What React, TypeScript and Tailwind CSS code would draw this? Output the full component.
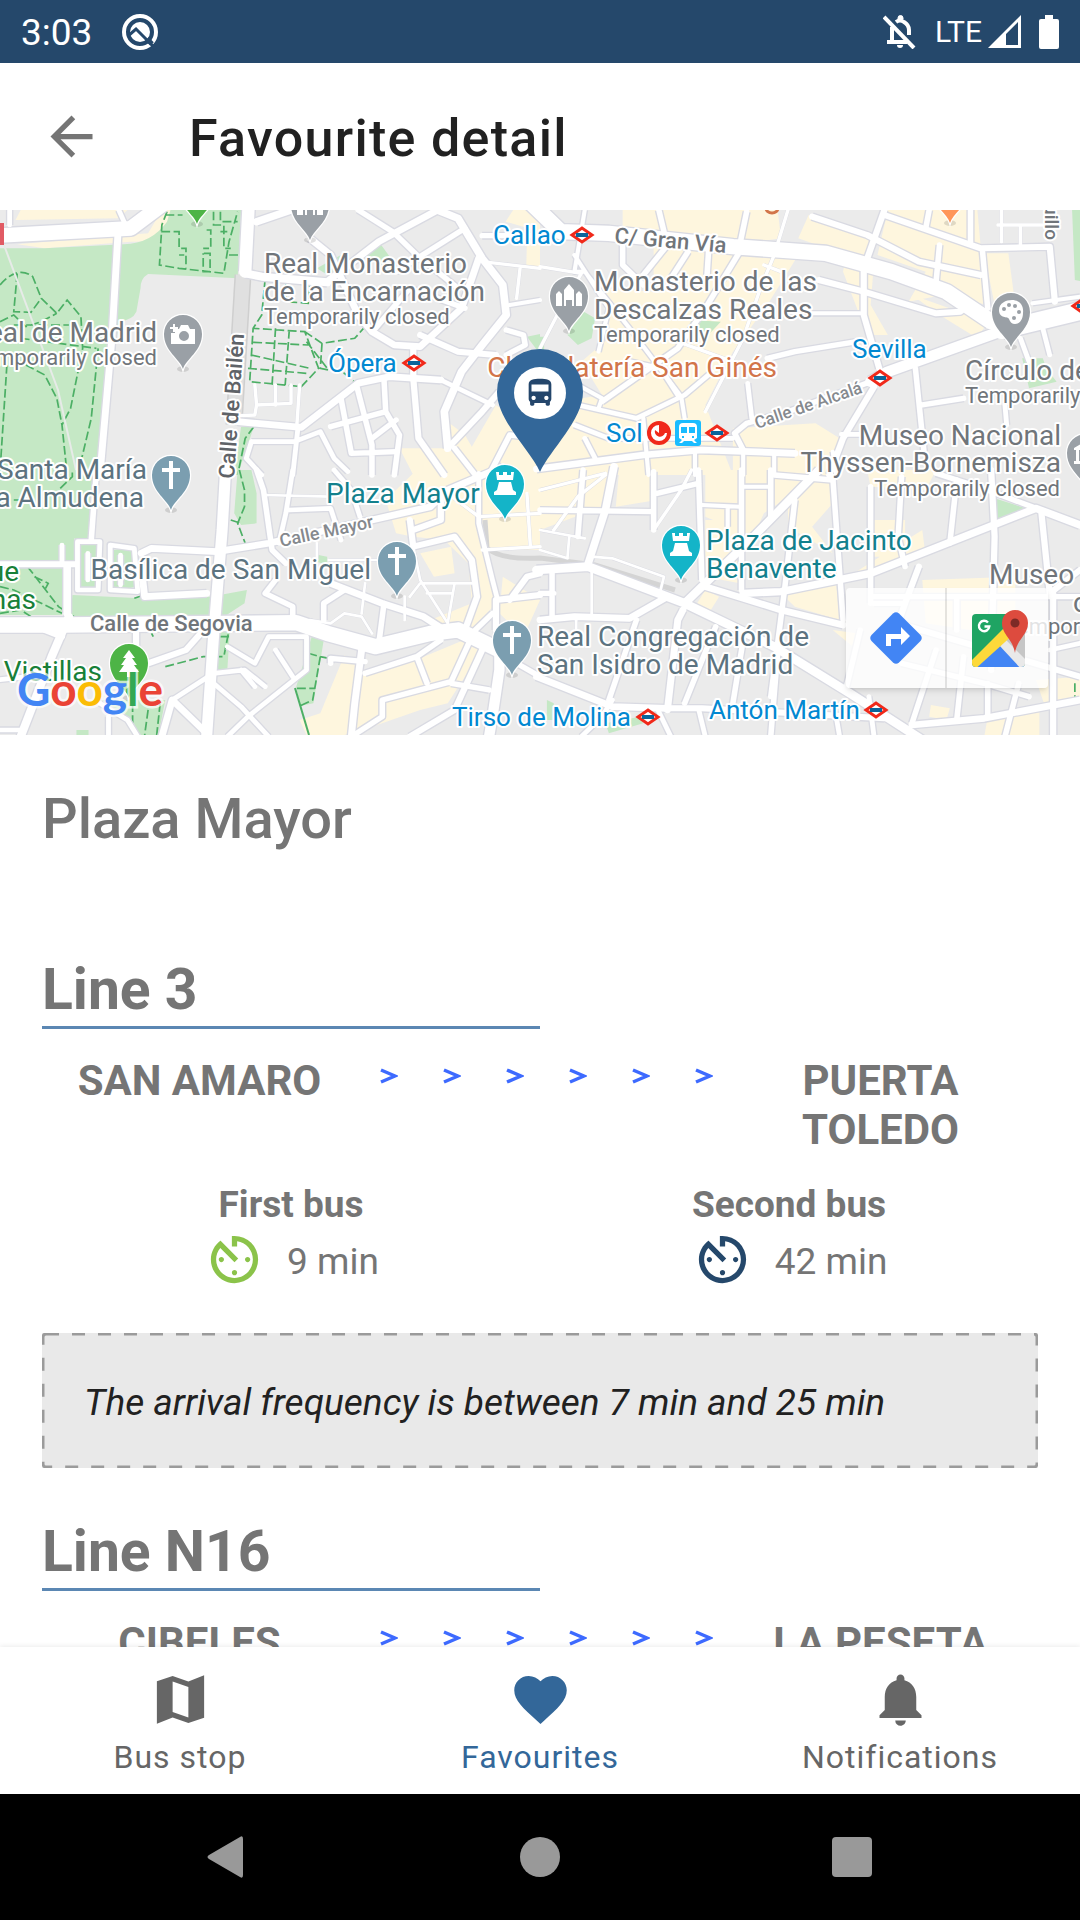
import type { ReactNode } from "react";
import { MdArrowBack, MdAvTimer, MdDirectionsBus, MdFavorite, MdNotifications } from "react-icons/md";

type Road = [number, string];
type Tile = {
  transform: string;
  cream: string[];
  green: string[];
  paths: string[];
  roads: Road[];
};

const TILES: Tile[] = [
  {
    transform: "translate(0 205) scale(.3444 .3333)",
    cream: [
      "M45 45L60 15H370L345 40Z",
      "M50 118L430 85L470 15H510L480 80Q440 115 380 110L130 130Z",
      "M1300 650L1350 690L1370 725L1440 600L1568 700V810H1200L1160 730L1290 730Z",
      "M1490 15h78v65l-100 -30z",
      "M1530 110h38v75h-40z",
    ],
    green: [
      "M0 130H130L360 118Q440 115 485 50L495 15H700L690 220L430 207Q408 220 408 250L396 320Q385 345 345 350L290 810H0Z",
      "M1050 140L1100 110L1135 160L1110 180Z",
      "M920 190L990 150L960 215Z",
      "M1530 395l38 -8v60z",
      "M700 665H737L690 810H680Z",
    ],
    paths: [
      "M0 240Q50 180 95 215L120 280L165 325L195 285L235 335L240 430L205 610L180 660L195 810",
      "M50 205L40 320L90 322L120 280M0 350L40 330L75 365L120 350L165 325",
      "M20 480L0 800M75 480L130 510L165 580L180 660",
      "M285 430L265 640L235 770M40 360H200M60 400L280 430",
      "M485 20L470 60L463 180L520 190L650 205L665 110L690 20M468 80H520V130H540V190M480 30H530",
      "M520 150H535M620 20V60H650V130H670M600 75H612V130H590M592 145H610V200H590V145M640 20V50H690M640 80H660M665 150H695",
      "M770 220L760 330L735 370L725 530L875 545L925 490L885 380L735 370M800 370L790 540M840 375L828 540M735 412L895 420M730 450L900 490M720 490L890 505",
      "M830 225V290L895 295L900 225M885 380L935 415L1030 400L1060 365M935 415L930 490L1000 505L1035 535M890 410L950 490",
      "M737 665L712 700L690 810",
    ],
    roads: [
      [44, "M-10 92L380 70L470 0"],
      [14, "M28 15V60M345 15L360 50"],
      [20, "M342 95L325 400L290 810"],
      [36, "M722 0L712 200"],
      [24, "M712 205L760 215L950 232"],
      [22, "M745 50L860 10"],
      [20, "M900 100L960 150L1000 240L1040 330L1080 380L1145 420L1220 425L1340 310L1390 160"],
      [16, "M1040 15L1140 80L1210 150L1330 250"],
      [20, "M950 230L1100 110L1280 10"],
      [16, "M1150 200L1350 70"],
      [16, "M1090 370L1190 250L1350 310"],
      [22, "M1270 15L1330 40L1400 160L1460 240L1470 330L1400 420L1340 500L1290 620L1300 730"],
      [16, "M1400 92H1568"],
      [18, "M1200 430V520L1215 700L1290 810"],
      [18, "M1220 390L1330 440L1440 450"],
      [16, "M1470 375L1520 390L1525 420L1470 450"],
      [12, "M1480 300L1568 285"],
      [10, "M1400 170L1568 190M1510 190L1500 280"],
      [20, "M690 650L875 667L1040 535L1130 515L1280 525"],
      [14, "M1280 525L1430 600"],
      [16, "M1035 540L1080 720V810M990 580L1020 745L1150 740"],
      [16, "M960 665L1120 620L1160 690L1145 810M1080 700L1150 645M1115 525L1120 620"],
      [14, "M865 670L850 810M730 710H855L930 680L970 760L1010 800M730 710L715 760L760 810"],
      [10, "M740 540L745 600L845 595V540M800 540V600M870 540L862 660M745 600L740 630L700 632"],
      [18, "M1300 730L1400 620L1450 560"],
      [16, "M1568 700L1480 690L1420 810"],
      [16, "M1320 730L1380 810"],
    ],
  },
  {
    transform: "translate(540 205) scale(.3444 .3333)",
    cream: [
      "M240 15H590L560 120L240 90Z",
      "M490 15H690L700 100L560 120Z",
      "M330 120L750 150L660 300L560 440L480 600L560 810H0V600L180 570L120 470L210 390L170 250L330 260Z",
      "M780 30L960 100L940 190L860 140L750 100Z",
      "M1010 15H1270L1280 130L1300 300L1170 270L1070 290L1120 200L980 150Z",
      "M890 140L970 170L960 300L1010 390H950L880 200Z",
      "M1290 145H1360L1380 300L1330 350Z",
      "M1080 270L1300 350L1270 400L1160 330Z",
      "M560 670L800 655L870 700L850 810H560Z",
      "M0 600L120 640L300 650V810H0Z",
    ],
    green: [
      "M110 310L160 340L150 400L110 420L80 390Z",
      "M440 345L525 350L480 400L430 370Z",
      "M1545 15h30v215l-22-5z",
      "M1400 460l60 0l10 30l30 40l-80 20z",
      "M0 395h12v40H0z",
    ],
    paths: [],
    roads: [
      [46, "M-40 -20L60 80L200 85L560 125L830 145L1020 200L1180 260L1310 350"],
      [54, "M1600 310L1340 375"],
      [32, "M1340 378L1010 500L960 530"],
      [16, "M960 530L720 620L600 655L565 685L590 735"],
      [18, "M790 35L950 90L1100 170L1280 210"],
      [18, "M1000 15L940 190V330L985 490"],
      [18, "M1000 30L1280 130L1480 125L1495 290"],
      [16, "M1250 15V110M1285 140L1300 310M1160 120L1150 230M1130 15L1120 70"],
      [18, "M810 225L940 260L1150 325L1220 320L1250 295"],
      [12, "M1430 295L1568 275M780 325H930"],
      [16, "M660 460L740 440L920 410"],
      [18, "M970 545L880 700L840 810"],
      [16, "M1090 490L1115 740M1110 600L1230 580"],
      [14, "M1460 370L1480 450M1350 600L1355 660M1395 400L1420 470M875 688H930"],
      [16, "M600 20L580 120M370 120L300 210M430 140L380 220M490 130L485 210M580 140L480 310L400 430L180 590"],
      [16, "M240 100V180L300 240M345 15L360 80"],
      [12, "M130 15L100 200L130 200L260 370L410 575L420 640M100 150L200 310L170 440"],
      [10, "M720 15L680 150L640 250L590 400L480 620M650 180L700 200"],
      [10, "M0 185L120 205L50 330L0 430M320 380L480 440L560 470"],
      [12, "M110 540L180 580L170 610"],
      [14, "M110 600L280 640L420 570L500 500M260 470L350 490L400 570"],
      [14, "M100 660L200 700H560M130 700L160 760"],
      [20, "M-10 792L300 750L470 735L740 745"],
      [14, "M603 535L615 640"],
      [12, "M300 640L315 810M450 740V810M590 740V810M680 740V810M850 740L860 810"],
      [10, "M1340 15V110M1330 60H1470M1395 60V125"],
    ],
  },
  {
    transform: "translate(0 470) scale(.3444 .3333)",
    cream: [
      "M1120 90L1200 10H1568V240L1400 235L1440 400L1370 480L1250 450L1370 400L1360 280L1290 210L1200 200L1150 190Z",
      "M1000 555L1060 600L1230 560L1370 500L1400 540L1300 700L1220 720L1080 770L1000 795H890L870 750L930 730Z",
      "M1460 320L1568 390L1520 500L1450 430Z",
      "M1220 250l90 -20l10 80l-60 10z",
    ],
    green: [
      "M0 0H285L260 230L215 205V275H0Z",
      "M0 295H185L180 435H0Z",
      "M225 220H285V360H225Z",
      "M325 240L385 235L395 350L325 365Z",
      "M210 375L410 385L610 380L717 360L710 400L650 440H205Z",
      "M690 0H730L745 70V160L700 165L680 130Z",
      "M640 440H670L660 600H630Z",
      "M905 500L940 510L910 700L870 708L860 650Z",
      "M290 690H480L460 795H410L350 740Z",
      "M925 255l25 5v25l-30-10z",
      "M222 780h35v15h-35z",
    ],
    paths: [
      "M80 290L110 330L170 410L215 440M0 350L40 360L120 400L180 430M100 320L140 340L130 360M0 430L60 420L90 440",
      "M695 0L710 60V110L690 160L712 220M670 150L700 160",
      "M480 590L590 560L650 560L665 480M640 500H665M640 440H680M440 490L445 500",
      "M895 550L930 560L955 565M930 560L908 690L870 708M862 655H915",
      "M385 700V760M430 720L420 795M465 700L455 795M390 385L410 378M175 55L210 20V0M40 90H60",
    ],
    roads: [
      [32, "M655 0L645 180L620 500L600 800"],
      [46, "M-20 465H180L860 458L950 490L1090 530L1250 490L1330 480L1450 540"],
      [18, "M-10 283H220"],
      [22, "M195 290V430"],
      [16, "M280 0L265 210"],
      [14, "M225 215H290L285 360H225ZM320 225L390 235L400 365L320 360Z"],
      [14, "M180 225V280M255 250V330M350 255V345"],
      [20, "M600 370L420 380L410 290M410 250L440 235L630 245L780 220L1080 150L1250 110L1300 60L1460 -10"],
      [24, "M200 440L150 560L60 800"],
      [18, "M130 480L180 500M395 480V540M430 580L540 540L600 470"],
      [16, "M745 0L765 60L790 240L830 280"],
      [14, "M850 0L830 130L810 220M840 120L960 115L990 210M970 0L1020 60L1045 140"],
      [8, "M765 75L960 80M920 220V270M955 270H1100"],
      [16, "M800 330L770 370L850 410V450"],
      [20, "M960 340L1110 400L1230 440L1290 480"],
      [16, "M1115 400L1100 520M940 450V400L1000 360"],
      [8, "M900 450L960 460L1000 430L1050 440L1080 490M1050 430L1060 340"],
      [14, "M660 530L740 580L780 500H890V600L720 740L660 800M800 540L850 620"],
      [14, "M620 610L710 600L770 650M620 640L700 710L780 800M500 690L620 610M740 650L700 600"],
      [20, "M470 800L500 690L600 790"],
      [16, "M960 580V565L1060 575M1060 610L1210 560L1280 510M1210 560L1240 640"],
      [20, "M1050 540L1030 700L1020 800"],
      [16, "M1020 800L1110 740V690L1310 635L1370 500M1310 640L1420 660"],
      [18, "M1400 540L1320 720L1190 800"],
      [30, "M1450 480V600L1430 740L1420 800"],
      [18, "M1190 150L1200 230L1320 200L1370 270L1385 380L1350 480M1200 180L1280 150V90"],
      [8, "M1200 230L1220 330L1300 460M1190 380L1220 340H1370M1320 340L1300 460M1240 370H1310M1175 380V450"],
      [18, "M1440 480V390L1568 375M1480 390L1530 320L1568 310"],
      [14, "M1390 10V160L1430 330L1445 390"],
      [10, "M1400 240L1568 230M1300 70L1390 140L1568 130M1530 70L1540 230"],
      [16, "M1500 580L1568 620M1370 490L1430 430"],
      [14, "M-10 630L80 620M290 700L370 750L400 800M315 740V800M-10 780H60"],
    ],
  },
  {
    transform: "translate(540 470) scale(.3444 .3333)",
    cream: [
      "M0 0H200L180 110L0 180Z",
      "M230 0H320L340 90L220 110Z",
      "M480 0H700L750 60L650 130L620 200L480 140Z",
      "M480 150H580V340L480 320Z",
      "M720 0H850V100L790 170L850 250L720 170Z",
      "M700 370L860 340L870 450L740 410Z",
      "M880 330L1110 180L1120 260L1020 300L950 320Z",
      "M950 0H1150L1120 60L960 50Z",
      "M970 150H1060V260H970Z",
      "M1110 330L1380 320V500L1120 460Z",
      "M1440 630L1568 620V700L1470 720Z",
      "M1300 740L1450 720V800H1290Z",
      "M850 480L920 490V540Z",
      "M480 360L520 380L490 430L450 410Z",
      "M1135 705l55 10l-10 35l-50-10z",
    ],
    green: ["M1320 85L1420 118L1320 155Z", "M20 690l20 10v50h-20z", "M190 760l100-20l10 20l-100 30z"],
    paths: ["M1553 640V700M105 278h12"],
    roads: [
      [22, "M215 -10L190 120L140 280"],
      [26, "M-10 300L140 290L420 400L680 530L900 670L1110 810"],
      [20, "M480 350L700 420L880 465"],
      [20, "M415 420L400 450L370 720"],
      [24, "M810 0L620 200L500 320L420 400"],
      [16, "M330 5V180M0 120L330 125M125 0L110 200M340 70L460 40"],
      [10, "M0 60L190 10M40 180L110 80L190 15M330 180L410 60L440 0"],
      [16, "M460 0L470 330M585 0V360M670 0V140M740 90L710 360L670 680"],
      [12, "M470 105L580 110M545 110V170M590 50H670"],
      [16, "M680 15L850 30"],
      [22, "M590 370L700 365L960 310L1440 115L1568 165"],
      [16, "M850 20L880 450M960 50V400M1050 20L1040 200L1060 290M1210 30L1190 220"],
      [18, "M1310 0L1320 200L1310 600"],
      [16, "M1150 10L1300 60L1440 115"],
      [18, "M1455 120L1480 370L1568 300"],
      [18, "M1100 290L1060 400L1040 460L1568 620"],
      [20, "M0 450L100 440L260 445L370 380M-10 620L210 710L370 715"],
      [16, "M35 310V440M0 370H40M280 450L200 690M510 470L420 700M590 510L560 700M690 550L670 800"],
      [18, "M370 715L470 715L1000 745"],
      [14, "M460 715L480 800M340 715L380 800M210 690L180 740L120 800"],
      [16, "M960 380H1568M970 400H1060M1210 390V480M930 480L890 650M1150 540L1080 760"],
      [16, "M1050 580L1290 640L1420 680M1390 640L1350 800M1230 560L1210 750M1300 640V740"],
      [20, "M1080 765L1290 745L1568 690"],
      [18, "M1490 370V800"],
      [14, "M1480 540L1568 520M860 740L870 800M955 680L970 800"],
      [8, "M150 260L210 265L360 320L350 360M0 180L130 205M85 200L80 260M0 240L80 265M150 300V440M105 440V480"],
    ],
  },
];

const GREY = "#70757a";
const BLUE = "#0288d1";
const SLATE = "#5c7380";
const TEAL = "#12808d";
const GREEN = "#188038";

type MapText = {
  x: number;
  y: number;
  text: string;
  fill: string;
  size?: number;
  end?: boolean;
  rotate?: number;
  bold?: boolean;
};

const LABELS: MapText[] = [
  { x: 264, y: 273, text: "Real Monasterio", fill: GREY },
  { x: 264, y: 301, text: "de la Encarnación", fill: GREY },
  { x: 264, y: 324, text: "Temporarily closed", fill: GREY, size: 22 },
  { x: 493, y: 244, text: "Callao", fill: BLUE, size: 26 },
  { x: 328, y: 372, text: "Ópera", fill: BLUE, size: 26 },
  { x: 157, y: 342, text: "eal de Madrid", fill: GREY, end: true },
  { x: 157, y: 365, text: "mporarily closed", fill: GREY, size: 22, end: true },
  { x: 147, y: 479, text: "Santa María", fill: SLATE, end: true },
  { x: 144, y: 507, text: "a Almudena", fill: SLATE, end: true },
  { x: 234, y: 479, text: "Calle de Bailén", fill: "#5f6368", size: 22, rotate: -86, bold: true },
  { x: 594, y: 291, text: "Monasterio de las", fill: GREY },
  { x: 594, y: 319, text: "Descalzas Reales", fill: GREY },
  { x: 594, y: 342, text: "Temporarily closed", fill: GREY, size: 22 },
  { x: 777, y: 377, text: "Chocolatería San Ginés", fill: "#d2754a", end: true },
  { x: 614, y: 243, text: "C/ Gran Vía", fill: GREY, size: 22, rotate: 5, bold: true },
  { x: 852, y: 358, text: "Sevilla", fill: BLUE, size: 26 },
  { x: 965, y: 380, text: "Círculo de", fill: GREY },
  { x: 965, y: 403, text: "Temporarily", fill: GREY, size: 22 },
  { x: 1061, y: 445, text: "Museo Nacional", fill: GREY, end: true },
  { x: 1061, y: 472, text: "Thyssen-Bornemisza", fill: GREY, end: true },
  { x: 1060, y: 496, text: "Temporarily closed", fill: GREY, size: 22, end: true },
  { x: 606, y: 442, text: "Sol", fill: BLUE, size: 26 },
  { x: 757, y: 429, text: "Calle de Alcalá", fill: "#85898e", size: 17, rotate: -19, bold: true },
  { x: 326, y: 503, text: "Plaza Mayor", fill: TEAL },
  { x: 281, y: 547, text: "Calle Mayor", fill: "#85898e", size: 18, rotate: -12, bold: true },
  { x: 371, y: 579, text: "Basílica de San Miguel", fill: SLATE, end: true },
  { x: 90, y: 631, text: "Calle de Segovia", fill: GREY, size: 22, bold: true },
  { x: 102, y: 681, text: "Vistillas", fill: GREEN, end: true },
  { x: 19, y: 581, text: "ue", fill: GREEN, end: true },
  { x: 36, y: 609, text: "nas", fill: GREEN, end: true },
  { x: 706, y: 550, text: "Plaza de Jacinto", fill: TEAL },
  { x: 706, y: 578, text: "Benavente", fill: TEAL },
  { x: 989, y: 584, text: "Museo", fill: GREY },
  { x: 1073, y: 612, text: "c", fill: GREY },
  { x: 1017, y: 634, text: "empor", fill: GREY, size: 22 },
  { x: 537, y: 646, text: "Real Congregación de", fill: SLATE },
  { x: 537, y: 674, text: "San Isidro de Madrid", fill: SLATE },
  { x: 452, y: 726, text: "Tirso de Molina", fill: BLUE, size: 26 },
  { x: 709, y: 719, text: "Antón Martín", fill: BLUE, size: 26 },
  { x: 1045, y: 240, text: "uillo", fill: GREY, size: 19, rotate: 90, bold: true, end: true },
];

const METROS: [number, number][] = [
  [582, 235],
  [414, 363],
  [880, 378],
  [717, 433],
  [648, 717],
  [876, 710],
  [1083, 306],
];

function Pin({ x, y, fill, children }: { x: number; y: number; fill: string; children?: ReactNode }) {
  return (
    <g transform={`translate(${x} ${y})`}>
      <ellipse cx="0" cy="35" rx="6" ry="3" fill="#000" opacity=".12" />
      <path
        d="M0 35C-3 25-19 17-19 0A19 19 0 0 1 19 0C19 17 3 25 0 35Z"
        fill={fill}
        stroke="#fff"
        strokeWidth="2.5"
        paintOrder="stroke"
      />
      <g fill="#fff">{children}</g>
    </g>
  );
}

const cross = <path d="M-2-14H2V-7H9V-3H2V14H-2V-3H-9V-7H-2Z" />;
const castle = (
  <>
    <path d="M-9-12H-6V-9H-2V-12H2V-9H6V-12H9L8-4H-8Z" />
    <path d="M-6-2H6L8 6L11 8V11H-11V8L-8 6Z" />
  </>
);
const church = (
  <path d="M-13 10V-2L-10-5L-7-2V10H-5V-6L0-12L5-6V10H7V-2L10-5L13-2V10H3V4H-3V10Z" />
);

function CityMap() {
  return (
    <svg
      viewBox="0 210 1080 525"
      preserveAspectRatio="xMidYMid slice"
      className="block h-[525px] w-full bg-[#ebebeb]"
      role="img"
      aria-label="Map of central Madrid"
      fontFamily="Roboto, sans-serif"
    >
      <rect y="210" width="1080" height="525" fill="#ebebeb" />
      {TILES.map((t) => (
        <g key={t.transform} transform={t.transform}>
          <path d={t.cream.join("")} fill="#fef6de" />
          <path d={t.green.join("")} fill="#c5e8c5" />
          <path d={t.paths.join("")} fill="none" stroke="#4caf65" strokeWidth="5" strokeDasharray="26 10" />
        </g>
      ))}
      <path d="M243 275L234 425" stroke="#cfcfcf" strokeWidth="17" />
      <path d="M243 275L234 425" stroke="#e0e0e0" strokeWidth="14" />
      <path d="M485 520L487 548Q500 560 540 558L595 565L675 590" fill="none" stroke="#d4d4d4" strokeWidth="5" />
      {TILES.map((t) => (
        <g key={t.transform} transform={t.transform} fill="none" stroke="#d9dae2" strokeLinejoin="round">
          {t.roads.map(([w, d]) => (
            <path key={d} d={d} strokeWidth={w > 10 ? w + 8 : w + 2} />
          ))}
        </g>
      ))}
      {TILES.map((t) => (
        <g key={t.transform} transform={t.transform} fill="none" stroke="#fff" strokeLinejoin="round" strokeLinecap="round">
          {t.roads.map(([w, d]) => (
            <path key={d} d={d} strokeWidth={w} />
          ))}
        </g>
      ))}
      <path d="M4 245L58 390L76 470" fill="none" stroke="#e7ebe8" strokeWidth="2" />
      <path d="M295 688L309 735" stroke="#4caf65" strokeWidth="2" />
      <rect y="223" width="4" height="22" fill="#e15b64" />

      <Pin x={197} y={189} fill="#4db446" />
      <Pin x={950} y={188} fill="#ff9659" />
      <Pin x={310} y={205} fill="#9aa0a6">
        {church}
      </Pin>
      <Pin x={183} y={334} fill="#9aa0a6">
        <path
          fillRule="evenodd"
          d="M-4-5L-2-9H5L7-5H12V10H-12V-1H-8V-5ZM1-3A5 5 0 1 0 1 7A5 5 0 1 0 1-3M-10-10H-8V-7H-5V-5H-8V-2H-10V-5H-13V-7H-10Z"
        />
      </Pin>
      <Pin x={569} y={296} fill="#9aa0a6">
        {church}
      </Pin>
      <Pin x={1011} y={312} fill="#9aa0a6">
        <path d="M-12-2C-12-9-5-12 1-12C8-12 13-7 12 1C12 7 9 12 4 12C1 12-1 10-2 7C-3 4-12 7-12-2Z" />
        <g fill="#9aa0a6">
          <circle cx="-7" cy="-3" r="2" />
          <circle cx="-2" cy="-7" r="2" />
          <circle cx="4" cy="-6" r="2" />
          <circle cx="8" cy="0" r="2" />
          <circle cx="3" cy="6" r="2" />
        </g>
      </Pin>
      <Pin x={1086} y={453} fill="#9aa0a6">
        <path d="M-12-5L0-12V11H-12V8H-10V-3H-12ZM-7-3V8H-5V-3Z" />
      </Pin>
      <Pin x={171} y={475} fill="#7b9eb0">
        {cross}
      </Pin>
      <Pin x={397} y={561} fill="#7b9eb0">
        {cross}
      </Pin>
      <Pin x={512} y={640} fill="#7b9eb0">
        {cross}
      </Pin>
      <Pin x={505} y={484} fill="#14b4c8">
        {castle}
      </Pin>
      <Pin x={681} y={545} fill="#14b4c8">
        {castle}
      </Pin>
      <Pin x={129} y={663} fill="#4db446">
        <path d="M0-13L6-5H3L8 2H5L10 9H2V14H-2V9H-10L-5 2H-8L-3-5H-6Z" />
      </Pin>

      {LABELS.map((l) => (
        <text
          key={`${l.x}-${l.y}-${l.text}`}
          x={l.x}
          y={l.y}
          fill={l.fill}
          fontSize={l.size ?? 28}
          fontWeight={l.bold ? 500 : 400}
          textAnchor={l.end ? "end" : "start"}
          transform={l.rotate ? `rotate(${l.rotate} ${l.x} ${l.y})` : undefined}
          stroke="#fff"
          strokeWidth="4"
          strokeLinejoin="round"
          paintOrder="stroke"
        >
          {l.text}
        </text>
      ))}

      {METROS.map(([x, y]) => (
        <g key={x} transform={`translate(${x} ${y})`}>
          <path d="M-10 0L0-7L10 0L0 7Z" fill="#fff" stroke="#f0291a" strokeWidth="3" />
          <rect x="-6" y="-2" width="12" height="4" fill="#0a659b" />
        </g>
      ))}
      <circle cx="659" cy="433" r="10" fill="#fff" stroke="#f0291a" strokeWidth="4" />
      <path d="M659 423A10 10 0 0 1 669 433H665A5 5 0 1 1 655 430L659 433Z" fill="#f0291a" />
      <rect x="675" y="420" width="26" height="26" rx="3" fill="#1abcff" />
      <path
        fillRule="evenodd"
        fill="#fff"
        d="M683 423H693Q697 423 697 427V438L694 440L697 443H694L692 441H684L682 443H679L682 440L679 438V427Q679 423 683 423M681 427V433H687V427ZM689 427V433H695V427ZM682 436V438H684V436ZM692 436V438H694V436Z"
      />
      <path d="M766 208A6 5 0 0 0 778 208" fill="none" stroke="#d2754a" strokeWidth="3" />

      <path d="M540 472C530 450 497 420 497 392A43 43 0 0 1 583 392C583 420 550 450 540 472Z" fill="#336799" />
      <circle cx="540" cy="393" r="26" fill="#fff" />
      <MdDirectionsBus x="523" y="376" size={34} color="#24466b" />

      <text x="17" y="706" fontFamily="Lato, Roboto, sans-serif" fontSize="46" stroke="#fff" strokeOpacity=".7" strokeWidth="5" paintOrder="stroke" fontWeight="700">
        <tspan fill="#4285f4">G</tspan>
        <tspan fill="#ea4335">o</tspan>
        <tspan fill="#fbbc05">o</tspan>
        <tspan fill="#4285f4">g</tspan>
        <tspan fill="#34a853">l</tspan>
        <tspan fill="#ea4335">e</tspan>
      </text>
    </svg>
  );
}

function MapActions() {
  return (
    <div className="absolute right-8 bottom-[47px] flex rounded-sm bg-white/80 shadow-md">
      <button type="button" aria-label="Directions" className="flex h-[100px] w-[101px] items-center justify-center border-r-2 border-black/10">
        <svg viewBox="0 0 52 52" className="size-[52px]">
          <path d="M23 1.500Q26-1 29 1.500L50.500 23Q53 26 50.500 29L29 50.500Q26 53 23 50.500L1.500 29Q-1 26 1.500 23Z" fill="#4285f4" />
          <path d="M16 34V22H31V15L40 24L31 33V27H21V34Z" fill="#fff" />
        </svg>
      </button>
      <button type="button" aria-label="Open in Google Maps" className="flex h-[100px] w-[101px] items-center justify-center pl-1">
        <svg viewBox="0 0 58 58" className="size-[58px]">
          <defs>
            <clipPath id="sheet">
              <rect x="1" y="5" width="53" height="53" rx="4" />
            </clipPath>
          </defs>
          <g clipPath="url(#sheet)">
            <rect x="1" y="5" width="53" height="53" fill="#1fa463" />
            <path d="M54 5L27 31L54 58Z" fill="#c6c6c6" />
            <path d="M27 31L54 58H1Z" fill="#4285f4" />
            <path d="M27 35L33 29L58 54L52 62Z" fill="#e9e9e9" />
            <path d="M36 16L-2 54V62H2L44 24Z" fill="#fdd93a" />
          </g>
          <path d="M44 44C42 30 31 26 31 14A13 13 0 0 1 57 14C57 26 46 30 44 44Z" fill="#dd4b3e" />
          <circle cx="44" cy="14" r="4.500" fill="#7d2a26" />
          <path d="M17 13.500A5.200 5.200 0 1 0 18.300 17.500H13.500" fill="none" stroke="#fff" strokeWidth="2.400" />
        </svg>
      </button>
    </div>
  );
}

function StatusBar() {
  return (
    <div className="flex h-[63px] shrink-0 items-center bg-[#25486b] px-[21px] text-white">
      <span className="pt-0.5 text-[37px] leading-[43px]">3:03</span>
      <svg viewBox="0 0 36 36" className="ml-[30px] size-9" aria-hidden="true">
        <circle cx="18" cy="18" r="16" fill="none" stroke="#fff" strokeWidth="4" />
        <circle cx="18" cy="18" r="10" fill="#fff" />
        <path d="M6 22L14 15L34 35" fill="none" stroke="#25486b" strokeWidth="3" />
        <path d="M25 25L30 30" stroke="#25486b" strokeWidth="5" />
      </svg>
      <svg viewBox="0 0 34 34" className="ml-auto size-[34px]" fill="none" stroke="#fff" aria-hidden="true">
        <path d="M9 12V27M4 27H24M13 7Q17 4 21 7Q26 10 26 15V20" strokeWidth="4" />
        <path d="M15 4V3A2.500 2.500 0 0 1 20 3V4Z" fill="#fff" strokeWidth="1" />
        <path d="M14 30H20Q20 33 17 33Q14 33 14 30Z" fill="#fff" stroke="none" />
        <path d="M1 2L31 33" strokeWidth="4" />
      </svg>
      <span className="ml-[18px] text-[30px] leading-[38px]">LTE</span>
      <svg viewBox="0 0 33 33" className="ml-1.5 size-[33px]" aria-hidden="true">
        <path d="M33 0V33H0ZM30 7L18 19V30H30Z" fill="#fff" fillRule="evenodd" />
      </svg>
      <svg viewBox="0 0 20 34" className="ml-[18px] h-[34px] w-5" aria-hidden="true">
        <path d="M6 0H14V4H18Q20 4 20 6V32Q20 34 18 34H2Q0 34 0 32V6Q0 4 2 4H6Z" fill="#fff" />
      </svg>
    </div>
  );
}

function Arrival({ title, minutes, tone }: { title: string; minutes: number; tone: string }) {
  return (
    <div className="flex flex-1 flex-col items-center">
      <h3 className="text-[37px] leading-[43px] font-bold">{title}</h3>
      <div className="mt-0.5 flex items-center gap-[21px]">
        <MdAvTimer size={63} className={tone} aria-hidden="true" />
        <span className="pt-1 text-[37px] leading-[43px]">{minutes} min</span>
      </div>
    </div>
  );
}

type LineProps = { name: string; from: string; to: string; first: number; second: number; low: number; high: number };

function BusLine({ name, from, to, first, second, low, high }: LineProps) {
  return (
    <section>
      <h2 className="text-[57px] leading-[68px] font-bold">Line {name}</h2>
      <div className="mt-0.5 h-[3px] w-1/2 bg-[#5b87b3]" />
      <div className="mt-[27px] flex text-[42px] leading-[49px] font-bold">
        <p className="flex-1 text-center">{from}</p>
        <div className="flex h-[39px] w-[366px] items-center">
          {Array.from({ length: 6 }, (_, i) => (
            <span key={i} className="flex w-[63px] shrink-0 justify-center">
              <svg viewBox="0 0 18 16" className="h-4 w-[18px]" aria-hidden="true">
                <path d="M1 2L15 8L1 14" fill="none" stroke="#3d6aff" strokeWidth="3.500" />
              </svg>
            </span>
          ))}
        </div>
        <p className="flex-1 text-center">{to}</p>
      </div>
      <div className="mt-[29px] flex">
        <Arrival title="First bus" minutes={first} tone="text-[#8bc34a]" />
        <Arrival title="Second bus" minutes={second} tone="text-[#25486b]" />
      </div>
      <div className="relative mt-[42px] bg-[#e9e9e9] px-[42px] pt-12 pb-11">
        <svg className="absolute inset-0 size-full" aria-hidden="true">
          <rect x="1" y="1" className="h-[calc(100%-2px)] w-[calc(100%-2px)]" rx="3" fill="none" stroke="#9b9b9b" strokeWidth="3" strokeDasharray="13 13" />
        </svg>
        <p className="text-[37px] leading-[43px] text-[#212121] italic">
          The arrival frequency is between {low} min and {high} min
        </p>
      </div>
    </section>
  );
}

function NavItem({ label, icon, active }: { label: string; icon: ReactNode; active?: boolean }) {
  return (
    <a
      href="#"
      aria-current={active ? "page" : undefined}
      className={`flex flex-1 flex-col items-center pt-[21px] ${active ? "text-[#336799]" : "text-[#666666]"}`}
    >
      {icon}
      <span className="mt-2 text-[32px] leading-[37px] tracking-[1px]">{label}</span>
    </a>
  );
}

export default function App() {
  return (
    <div className="flex h-screen flex-col overflow-hidden bg-white font-[Roboto,sans-serif] text-[#757575]">
      <StatusBar />
      <header className="flex h-[147px] shrink-0 items-center pl-10">
        <button type="button" aria-label="Back">
          <MdArrowBack size={63} />
        </button>
        <h1 className="ml-[86px] pt-1 text-[52px] leading-[61px] font-medium tracking-wide text-[#212121]">Favourite detail</h1>
      </header>

      <main className="min-h-0 flex-1 overflow-y-auto [scrollbar-width:none]">
        <div className="relative">
          <CityMap />
          <MapActions />
        </div>
        <div className="px-[42px] pt-[50px] pb-12">
          <p className="text-[56px] leading-[68px] font-medium">Plaza Mayor</p>
          <div className="mt-[103px] flex flex-col gap-[50px]">
            <BusLine name="3" from="SAN AMARO" to="PUERTA TOLEDO" first={9} second={42} low={7} high={25} />
            <BusLine name="N16" from="CIBELES" to="LA PESETA" first={12} second={47} low={20} high={35} />
          </div>
        </div>
      </main>

      <nav aria-label="Main" className="z-10 flex h-[147px] shrink-0 bg-white shadow-[0_-1px_5px_rgba(0,0,0,0.08)]">
        <NavItem
          label="Bus stop"
          icon={
            <svg viewBox="0 0 24 24" className="size-[63px]" fill="currentColor" aria-hidden="true">
              <path d="M15 5.100L9 3 3 5.020v16.200l6-2.330 6 2.100 6-2.020V2.770L15 5.100zm0 13.790l-6-2.110V5.110l6 2.110v11.670z" />
            </svg>
          }
        />
        <NavItem label="Favourites" icon={<MdFavorite size={63} />} active />
        <NavItem label="Notifications" icon={<MdNotifications size={63} />} />
      </nav>

      <div className="z-10 flex h-[126px] shrink-0 items-center justify-center bg-black">
        <button type="button" aria-label="System back" className="flex w-[312px] justify-center pr-1.5">
          <svg viewBox="0 0 36 42" className="h-[42px] w-9">
            <path d="M33 1Q36-1 36 3V39Q36 43 33 41L2 23Q-1 21 2 19Z" fill="#999" />
          </svg>
        </button>
        <button type="button" aria-label="Home" className="flex w-[312px] justify-center">
          <span className="size-10 rounded-full bg-[#999999]" />
        </button>
        <button type="button" aria-label="Recent apps" className="flex w-[312px] justify-center">
          <span className="size-10 rounded-sm bg-[#999999]" />
        </button>
      </div>
    </div>
  );
}
